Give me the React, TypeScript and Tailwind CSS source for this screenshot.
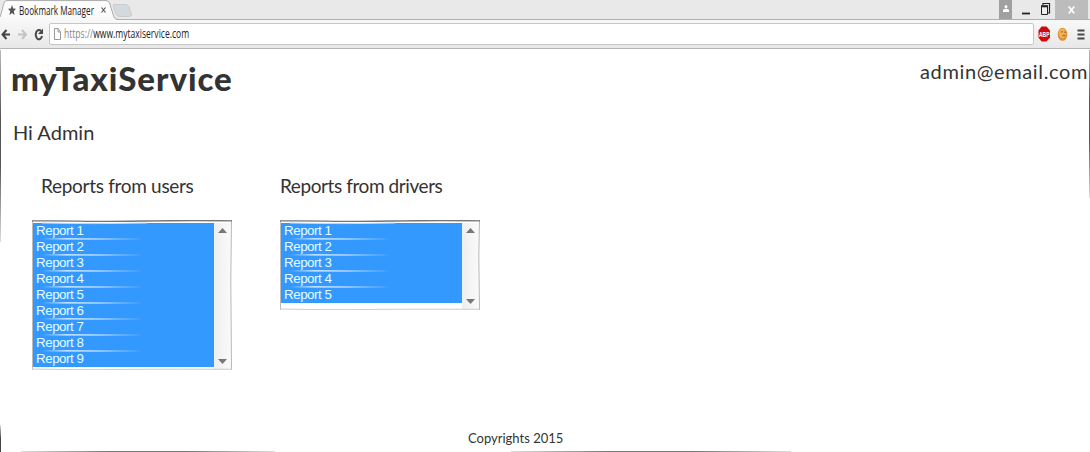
import React from "react";

const handFont = "font-['Lato',sans-serif] text-[#333]";

function TabStrip() {
  return (
    <div className="relative flex h-5 w-full shrink-0 items-start bg-[#e9e9e9]">
      <svg className="absolute inset-0" width="1090" height="20" viewBox="0 0 1090 20">
        <defs>
          <linearGradient id="tab" x1="0" y1="0" x2="0" y2="1">
            <stop offset="0" stopColor="#fff" />
            <stop offset="1" stopColor="#f8f8f8" />
          </linearGradient>
        </defs>
        <path d="M115 19.5H1090" stroke="#b0b0b0" fill="none" />
        <path d="M0 20V15C2 11 3 5 4.500 2Q5 .6 7 .6H106Q108.500 .6 109.500 3L114 17Q115 19.500 117 19.500V20Z" fill="url(#tab)" />
        <path d="M0 17C2 12 3 5 4.500 2Q5 .6 7 .6H106Q108.500 .6 109.500 3L114 17Q115 19.500 118 19.500" fill="none" stroke="#aaa" />
        <path d="M114 4.500H126Q128 4.500 129 7L131.500 14Q132 16.500 129 16.500H119Q117 16.500 116 14L113.500 7Q112.500 4.500 114 4.500Z" fill="#d4d9de" stroke="#c3c6ca" strokeWidth=".8" />
      </svg>
      <div className="relative flex h-5 w-[115px] items-center pl-[8px]">
        <svg width="8" height="10" viewBox="0 0 20 20" preserveAspectRatio="none" fill="#555">
          <path d="M10 0l3 7 7 .5-5.500 5L16.500 20 10 16l-6.500 4 2-7.500L0 7.500 7 7z" />
        </svg>
        <span className="ml-[3px] block w-[74px] origin-left scale-x-[0.68] whitespace-nowrap font-['Open_Sans',sans-serif] text-[12px] leading-[21px] text-[#222]">Bookmark Manager</span>
        <svg className="ml-[8px]" width="5" height="6" viewBox="0 0 5 6" stroke="#555" strokeWidth="1.200">
          <path d="M.5 .5L4.500 5.500M4.500 .5L.5 5.500" />
        </svg>
      </div>
      <div className="relative ml-auto flex h-[19px]">
        <div className="flex w-[13px] justify-center bg-[#a0a0a0] pt-[5px]">
          <svg width="6" height="7" viewBox="0 0 6 7" fill="#fff">
            <ellipse cx="3" cy="1.700" rx="1.400" ry="1.700" />
            <path d="M0 7V5Q0 4 3 4T6 5V7Z" />
          </svg>
        </div>
        <svg width="43" height="19" viewBox="0 0 43 19">
          <path d="M10 13.500H18" stroke="#222" strokeWidth="1.800" />
          <path d="M31 5V3.500H37.500V13H36" fill="none" stroke="#222" strokeWidth="1.200" />
          <path d="M29.500 6V14.500H35.500V6Z" fill="#eee" stroke="#222" />
          <path d="M29 6.300H36" stroke="#222" strokeWidth="2" />
        </svg>
        <div className="flex w-[33px] items-center justify-center bg-[#bcbcbc]">
          <svg width="7" height="8" viewBox="0 0 7 8" stroke="#fff" strokeWidth="1.600">
            <path d="M.7 .5L6.300 7.500M6.300 .5L.7 7.500" />
          </svg>
        </div>
        <div className="w-[2px]" />
      </div>
    </div>
  );
}

function Toolbar() {
  return (
    <div className="flex h-[29px] shrink-0 items-center border-b border-[#b5b5b5] bg-linear-to-b from-[#f8f8f8] to-[#e8e8e8]">
      <svg width="49" height="28" viewBox="0 0 49 28" fill="none" strokeWidth="2">
        <path d="M2.500 14.500H10M6.500 10L2.500 14.500L6.500 19" stroke="#444" />
        <path d="M18 14.500H26M22 10L26 14.500L22 19" stroke="#c4c4c4" />
        <path d="M41 11A3.200 4.700 0 1 0 42 16" stroke="#484848" />
        <path d="M43 8.500V14H38Z" fill="#484848" />
      </svg>
      <div className="flex h-[22px] w-[985px] items-center rounded-[2px] border border-[#c6c6c6] bg-white pl-[4px]">
        <svg width="7" height="12" viewBox="0 0 7 12" fill="#fff" stroke="#999">
          <path d="M.5 .5H4L6.500 4V11.500H.5ZM4 .5V4H6.500" />
        </svg>
        <span className="ml-[3px] origin-left scale-x-[0.713] whitespace-nowrap font-['Open_Sans',sans-serif] text-[12px] leading-5 text-[#222]">
          <span className="text-[#888]">https://</span>www.mytaxiservice.com
        </span>
      </div>
      <svg width="56" height="28" viewBox="0 0 56 28">
        <path d="M7.500 6.500H12.500L16 10.500V17.500L12.500 21.500H7.500L4.500 17.500V10.500Z" fill="#cf0a0a" />
        <text x="5" y="17" fill="#fff" fontFamily="Liberation Sans" fontWeight="700" fontSize="7" textLength="10.500" lengthAdjust="spacingAndGlyphs">ABP</text>
        <ellipse cx="28.500" cy="14.300" rx="4.800" ry="6.500" fill="#df8e2c" />
        <ellipse cx="28.300" cy="13.500" rx="3.700" ry="5" fill="#efb05a" />
        <path d="M28 11V12.500M31 11.500V13M28.500 16Q29.500 15 31 15.500" fill="none" stroke="#8a4a16" />
        <path d="M43.500 10.500H50.500M43.500 14.500H50.500M43.500 18.500H50.500" stroke="#484848" strokeWidth="2" />
      </svg>
    </div>
  );
}

function ReportList({ count, name, roomy = false }: { count: number; name: string; roomy?: boolean }) {
  const height = roomy ? 90 : 150;
  return (
    <div className={roomy ? "relative flex h-[90px] w-[200px] pl-px pt-[3px]" : "relative flex h-[150px] w-[200px] pl-px pt-[3px]"}>
      <ul aria-label={name} className="h-fit w-[181px] bg-[#3399ff] font-['Liberation_Sans',sans-serif] text-[13.33px] tracking-[-0.45px] leading-4 text-[#e4fdff]">
        {Array.from({ length: count }, (_, i) => (
          <li key={i} className="relative h-4 pl-[3px]">
            Report {i + 1}
            {i < count - 1 && (
              <svg className="absolute left-[9px] top-[15px]" width="102" height="2" viewBox="0 0 102 2">
                <path d="M0 1L25 .2L55 .4L102 1L55 1.600L25 1.500Z" fill="#f0f8ff" />
              </svg>
            )}
          </li>
        ))}
      </ul>
      <div className="mb-px flex w-[17px] flex-col items-center justify-between bg-linear-to-r from-[#eee] to-[#fafafa] pb-[5px] pt-[5px]">
        <svg width="9" height="5" viewBox="0 0 9 5"><path d="M0 5L4.500 0L9 5Z" fill="#777" /></svg>
        <svg width="9" height="5" viewBox="0 0 9 5"><path d="M0 0H9L4.500 5Z" fill="#777" /></svg>
      </div>
      <svg className="absolute left-0 top-0" width="200" height={height} viewBox={`0 0 200 ${height}`} fill="none">
        <path d={`M.5 0V${height}`} stroke="#bbb" />
        <path d={`M199.500 0L198.800 ${height * 0.4}L199.500 ${height}`} stroke="#b8b8b8" />
        <path d="M0 .9Q25 .6 45 1.200T110 1T200 .8" stroke="#757575" strokeWidth="1.300" />
        <path d="M10 3Q60 4.200 115 3" stroke="#c4dcf4" />
        <path d={`M0 ${height - 1}Q50 ${height} 85 ${height - 0.5}T200 ${height - 0.7}`} stroke="#ccc" />
      </svg>
    </div>
  );
}

export default function App() {
  return (
    <div className="flex h-[452px] w-[1090px] flex-col overflow-hidden bg-white">
      <TabStrip />
      <Toolbar />
      <main className={`relative flex min-h-0 flex-1 flex-col ${handFont}`}>
        <header className="flex h-[60px] shrink-0 items-start justify-between pl-[11px] pr-[2px]">
          <h1 className="mt-[9px] whitespace-nowrap text-[33px] font-black leading-10 tracking-[0.95px]">myTaxiService</h1>
          <span className="mt-[8px] whitespace-nowrap text-[20px] leading-7 tracking-[0.62px]">admin@email.com</span>
        </header>
        <p className="ml-[13px] mt-[9px] h-7 w-fit whitespace-nowrap text-[20px] leading-7">Hi Admin</p>
        <section className="ml-8 mt-[26px] flex gap-12">
          <div className="w-[200px]">
            <h2 className="ml-[9px] h-[48px] w-fit whitespace-nowrap text-[19px] leading-7 tracking-[-0.3px]">Reports from users</h2>
            <ReportList count={9} name="Reports from users" />
          </div>
          <div className="w-[200px]">
            <h2 className="h-[48px] w-fit whitespace-nowrap text-[19px] leading-7 tracking-[-0.42px]">Reports from drivers</h2>
            <ReportList count={5} name="Reports from drivers" roomy />
          </div>
        </section>
        <footer className="ml-[468px] mt-auto h-[24px] w-fit whitespace-nowrap text-[13px] leading-5">Copyrights 2015</footer>
        <svg className="absolute left-0 top-0" width="1090" height="403" viewBox="0 0 1090 403">
          <defs>
            <linearGradient id="edge" x1="0" y1="0" x2="0" y2="1">
              <stop offset="0" stopColor="#bbb" />
              <stop offset=".35" stopColor="#555" />
              <stop offset=".6" stopColor="#555" />
              <stop offset="1" stopColor="#ddd" />
            </linearGradient>
            <linearGradient id="corner" x1="0" y1="0" x2="0" y2="1">
              <stop offset="0" stopColor="#ddd" />
              <stop offset=".5" stopColor="#444" />
              <stop offset="1" stopColor="#444" />
            </linearGradient>
            <linearGradient id="base">
              <stop offset="0" stopColor="#ddd" />
              <stop offset=".35" stopColor="#777" />
              <stop offset=".65" stopColor="#777" />
              <stop offset="1" stopColor="#ddd" />
            </linearGradient>
          </defs>
          <rect y="1" width="1" height="192" fill="url(#edge)" />
          <rect y="376" width="1" height="27" fill="url(#corner)" />
          <rect x="1089" y="1" width="1" height="148" fill="url(#edge)" />
          <rect x="21" y="402" width="254" height="1" fill="url(#base)" />
          <rect x="511" y="402" width="280" height="1" fill="url(#base)" />
        </svg>
      </main>
    </div>
  );
}
